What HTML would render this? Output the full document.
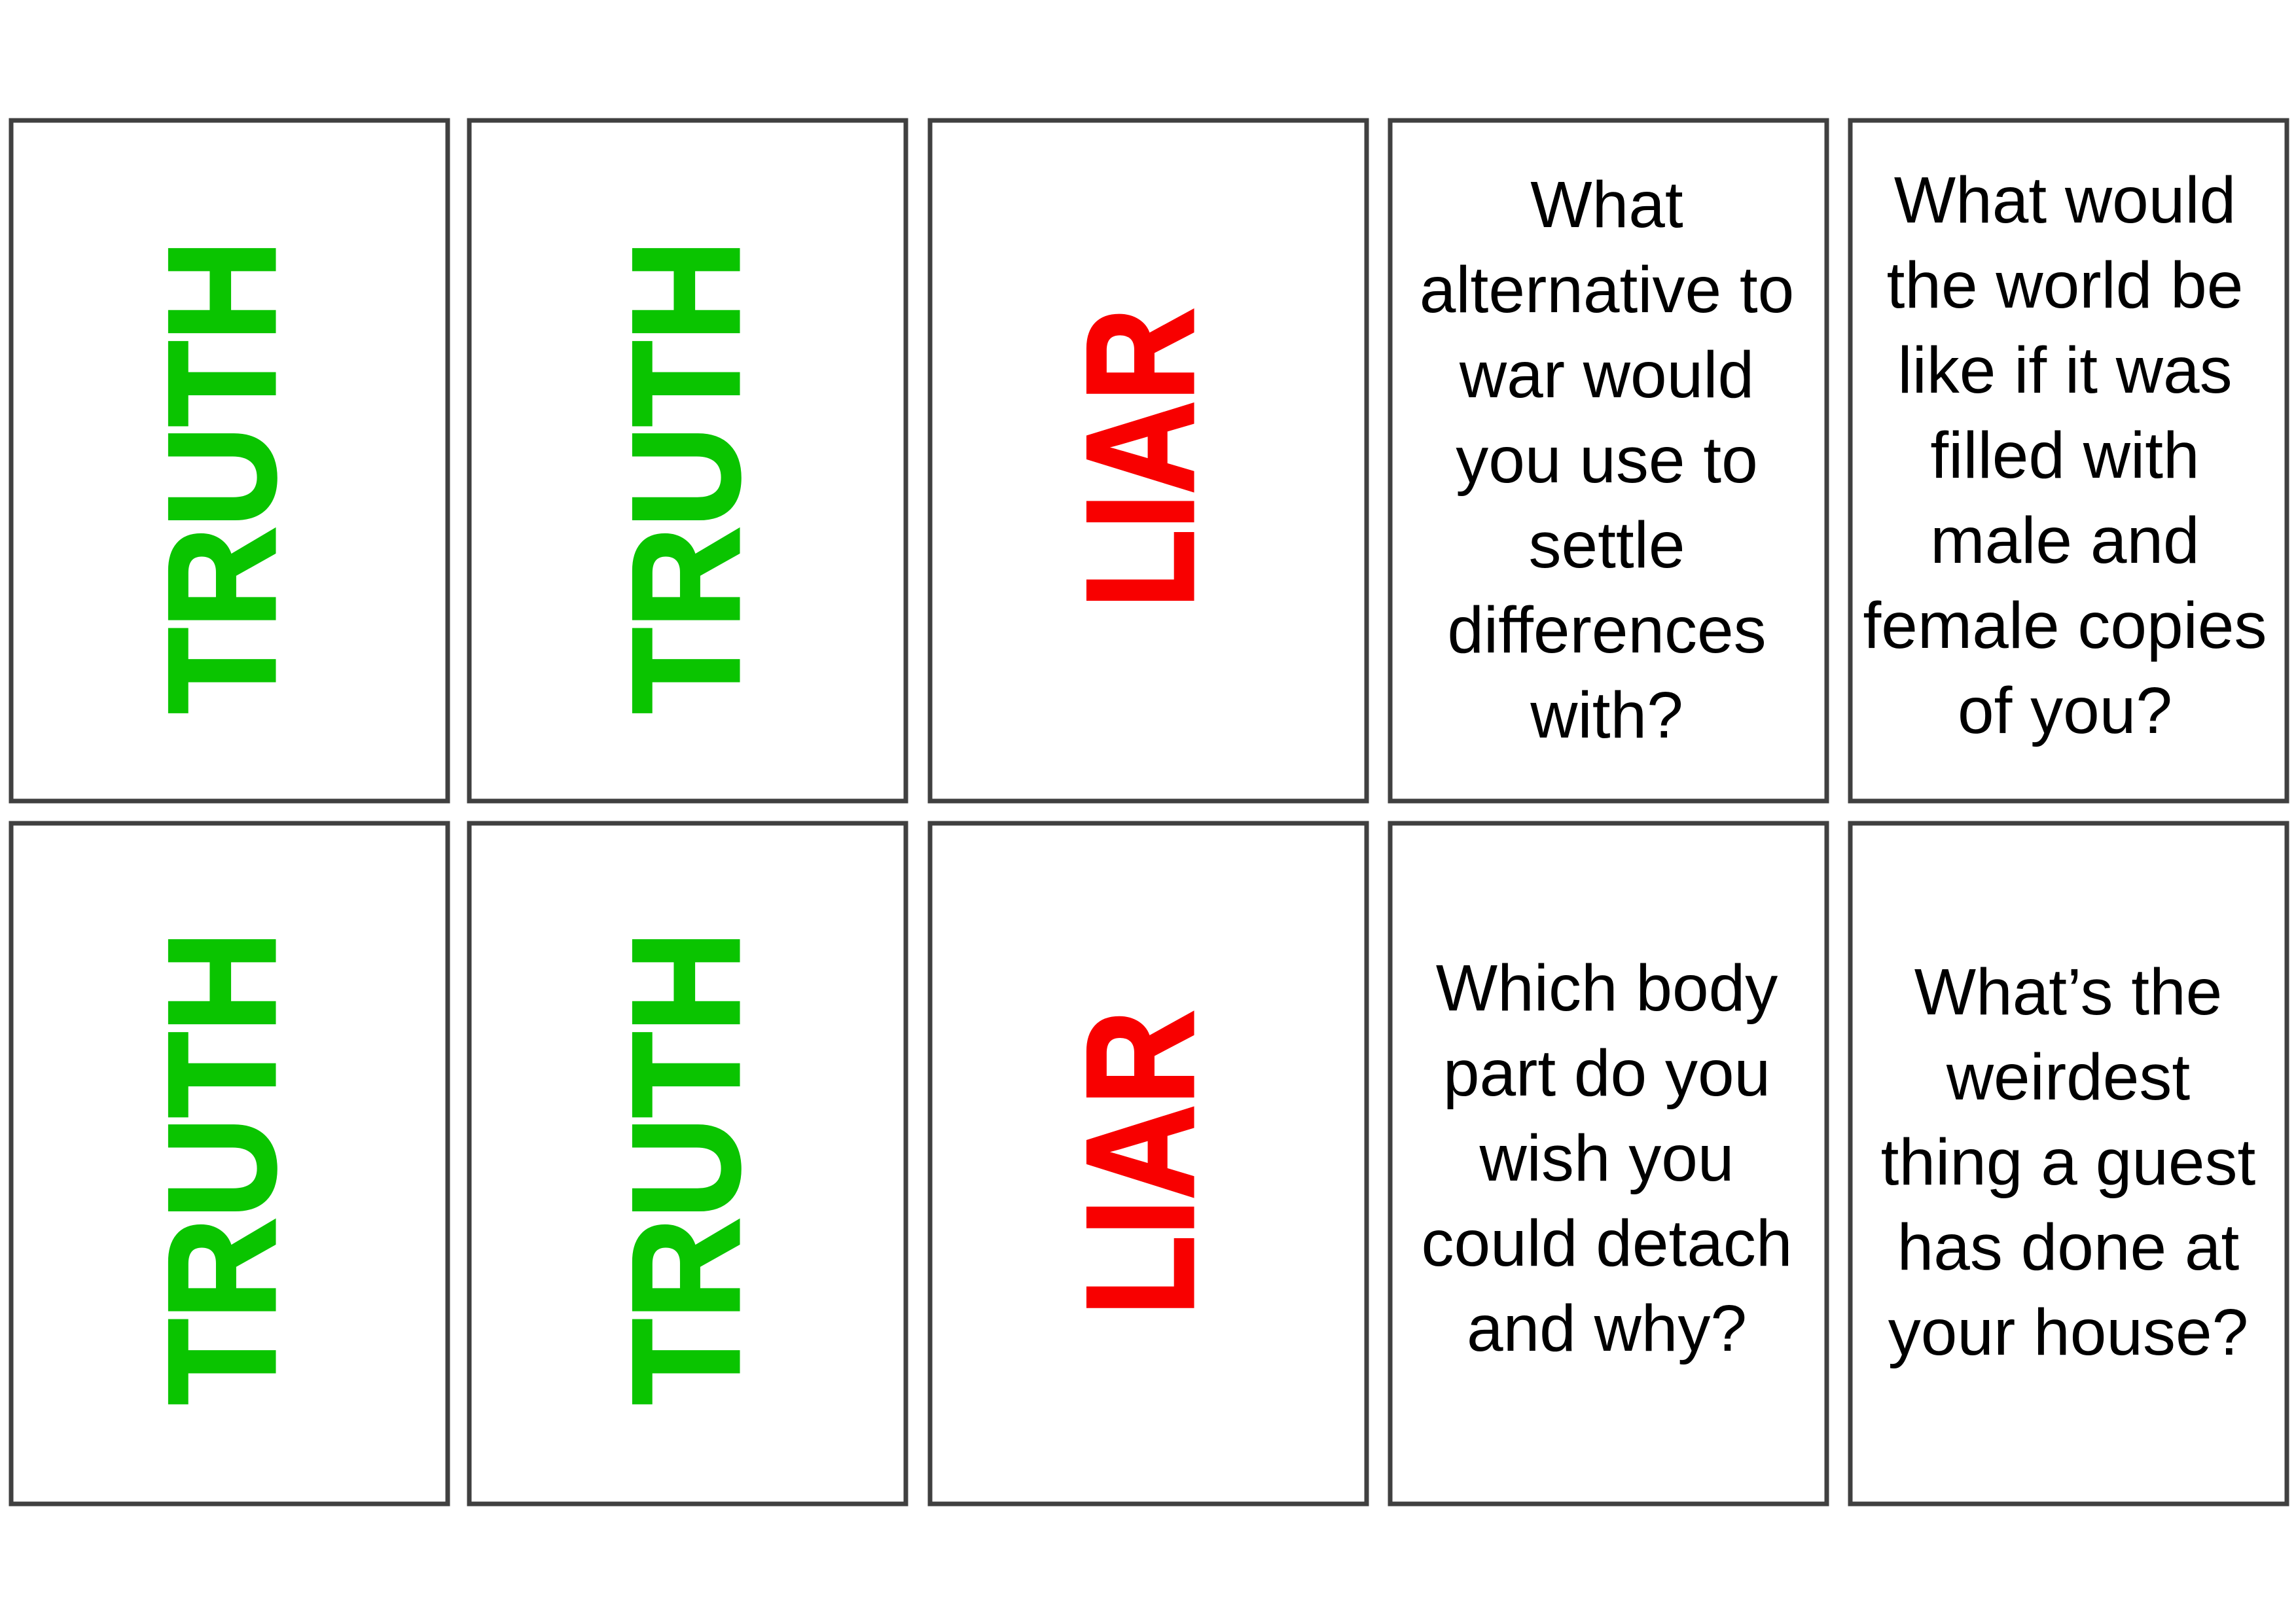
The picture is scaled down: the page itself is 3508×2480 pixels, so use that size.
<!DOCTYPE html>
<html><head><meta charset="utf-8"><style>
html,body{margin:0;padding:0;background:#fff;width:3508px;height:2480px;overflow:hidden}
svg{display:block}
.q{font-family:"Liberation Sans",sans-serif;font-size:100px;fill:#000;text-anchor:middle}
.b{font-family:"Liberation Sans",sans-serif;font-weight:bold}
</style></head><body>
<svg width="3508" height="2480" viewBox="0 0 3508 2480" xmlns="http://www.w3.org/2000/svg">
<g fill="none" stroke="#404040" stroke-width="7">
<rect x="17" y="184" width="667" height="1040"/>
<rect x="717" y="184" width="667" height="1040"/>
<rect x="1421" y="184" width="667" height="1040"/>
<rect x="2124" y="184" width="667" height="1040"/>
<rect x="2827" y="184" width="667" height="1040"/>
<rect x="17" y="1258" width="667" height="1040"/>
<rect x="717" y="1258" width="667" height="1040"/>
<rect x="1421" y="1258" width="667" height="1040"/>
<rect x="2124" y="1258" width="667" height="1040"/>
<rect x="2827" y="1258" width="667" height="1040"/>
</g>
<g class="b" fill="#0ac400" stroke="#0ac400" stroke-width="5" font-size="232">
<text transform="translate(419,1090) rotate(-90)" textLength="723" lengthAdjust="spacingAndGlyphs">TRUTH</text>
<text transform="translate(1128,1090) rotate(-90)" textLength="723" lengthAdjust="spacingAndGlyphs">TRUTH</text>
<text transform="translate(419,2146) rotate(-90)" textLength="723" lengthAdjust="spacingAndGlyphs">TRUTH</text>
<text transform="translate(1128,2146) rotate(-90)" textLength="723" lengthAdjust="spacingAndGlyphs">TRUTH</text>
</g>
<g class="b" fill="#f80000" stroke="#f80000" stroke-width="5" font-size="232">
<text transform="translate(1822,929) rotate(-90)" textLength="458" lengthAdjust="spacingAndGlyphs">LIAR</text>
<text transform="translate(1822,2010) rotate(-90)" textLength="466" lengthAdjust="spacingAndGlyphs">LIAR</text>
</g>
<g class="q">
<text x="2455" y="347">What</text>
<text x="2455" y="477">alternative to</text>
<text x="2455" y="607">war would</text>
<text x="2455" y="737">you use to</text>
<text x="2455" y="867">settle</text>
<text x="2455" y="997">differences</text>
<text x="2455" y="1127">with?</text>

<text x="3155" y="340">What would</text>
<text x="3155" y="470">the world be</text>
<text x="3155" y="600">like if it was</text>
<text x="3155" y="730">filled with</text>
<text x="3155" y="860">male and</text>
<text x="3155" y="990">female copies</text>
<text x="3155" y="1120">of you?</text>

<text x="2455" y="1544">Which body</text>
<text x="2455" y="1674">part do you</text>
<text x="2455" y="1804">wish you</text>
<text x="2455" y="1934">could detach</text>
<text x="2455" y="2064">and why?</text>

<text x="3160" y="1550">What’s the</text>
<text x="3160" y="1680">weirdest</text>
<text x="3160" y="1810">thing a guest</text>
<text x="3160" y="1940">has done at</text>
<text x="3160" y="2070">your house?</text>
</g>
</svg>
</body></html>
